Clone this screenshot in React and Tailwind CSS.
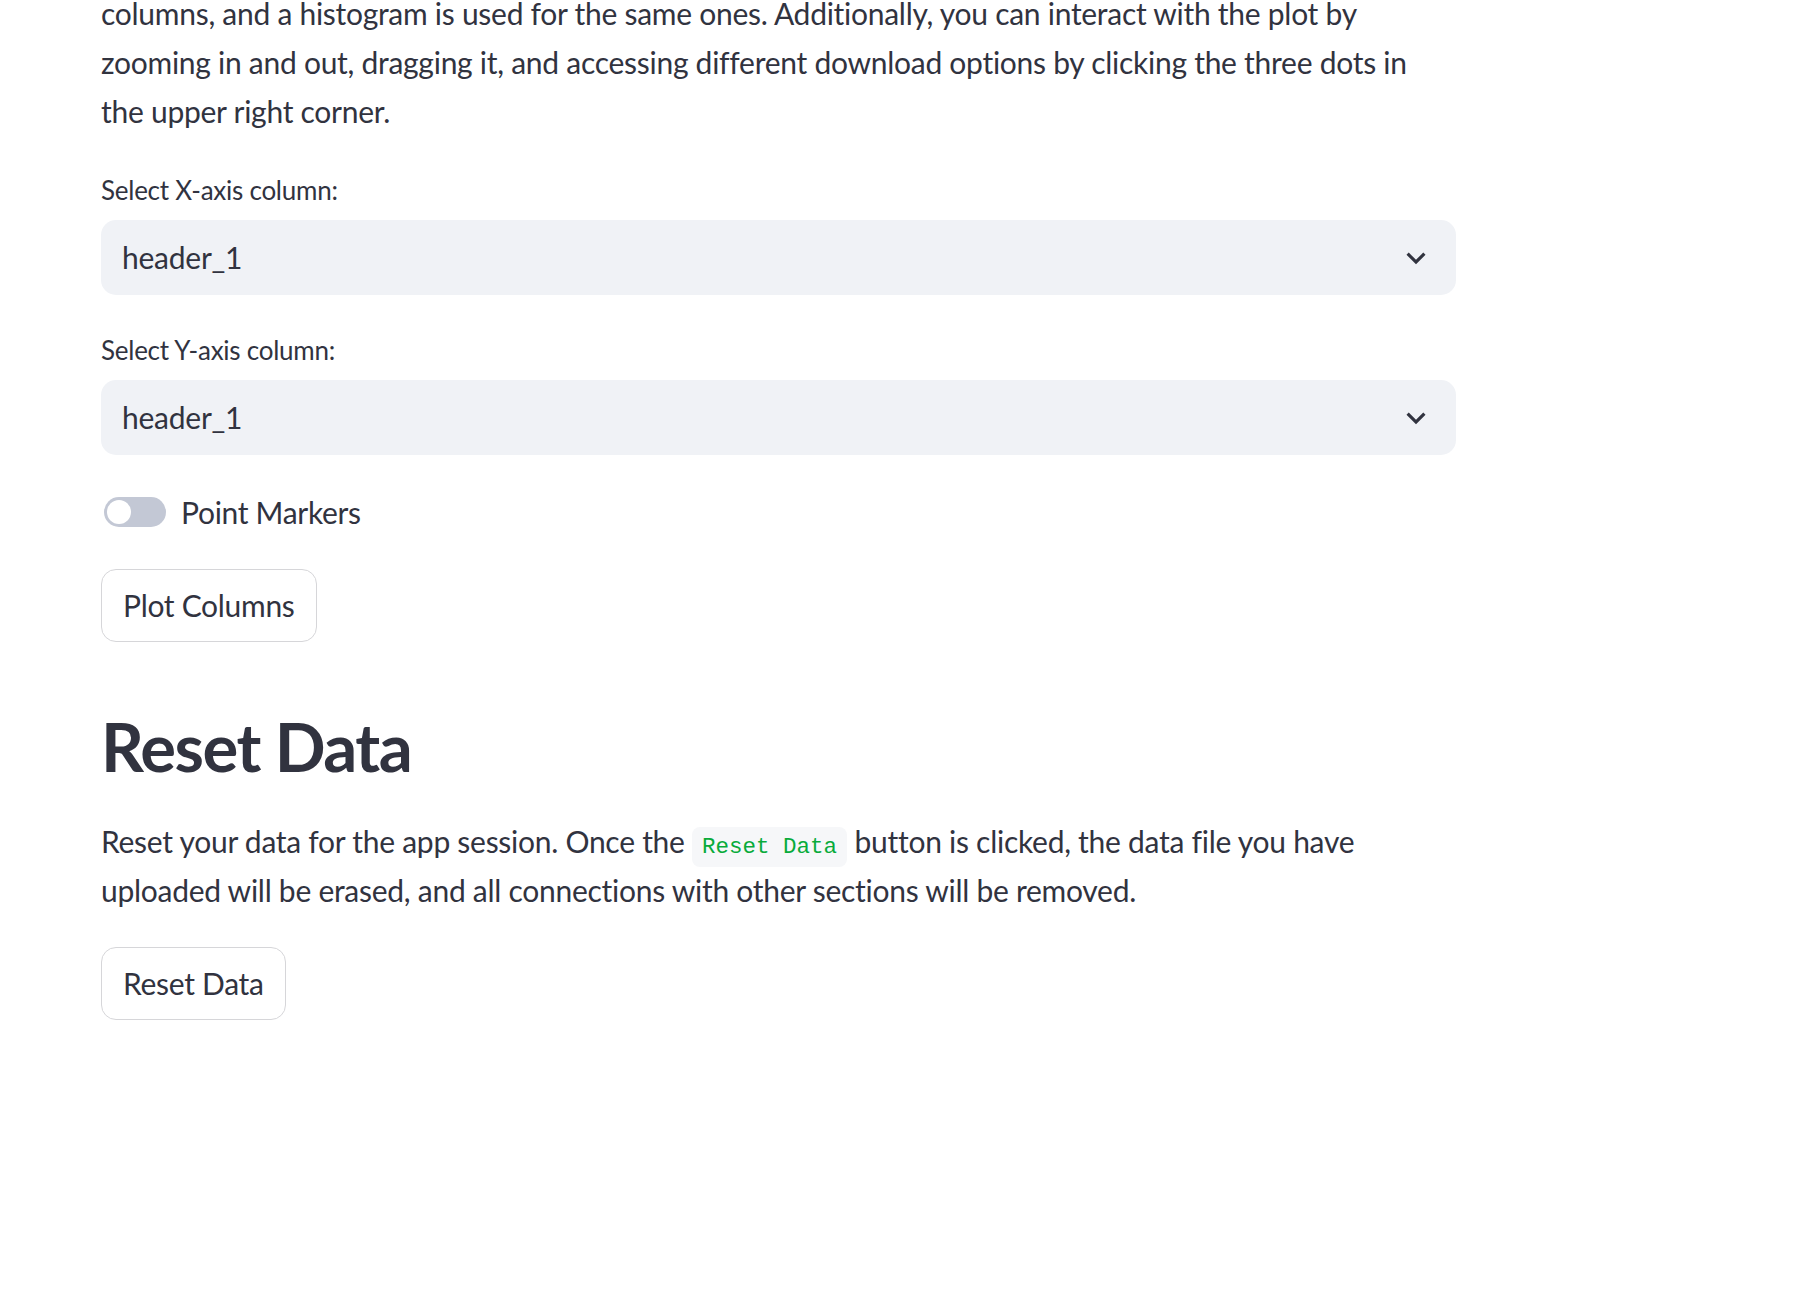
import React from "react";

const font = { fontFamily: "Lato, 'Noto Sans', sans-serif" };

function Chevron() {
  return (
    <svg width="38" height="38" viewBox="0 0 24 24" className="text-[#31333f]" fill="currentColor">
      <path d="M7.41 8.59 12 13.17l4.59-4.58L18 10l-6 6-6-6 1.41-1.41z" />
    </svg>
  );
}

function SelectBox({ label, value }) {
  return (
    <div className="flex flex-col">
      <div className="text-[26px] leading-[42px] tracking-[-0.25px] text-[#31333f]">{label}</div>
      <div className="mt-[9px] h-[75px] w-[1355px] rounded-[15px] bg-[#f0f2f6] flex items-center justify-between pl-[21px] pr-[21px]">
        <span className="text-[30px] tracking-[-0.25px] text-[#31333f]">{value}</span>
        <Chevron />
      </div>
    </div>
  );
}

function Button({ children }) {
  return (
    <button
      type="button"
      className="h-[73px] px-[21px] rounded-[15px] border border-[#d6d6d9] bg-white text-[30px] tracking-[-0.3px] text-[#31333f] self-start"
    >
      {children}
    </button>
  );
}

export default function App() {
  return (
    <div className="min-h-[1300px] bg-white overflow-hidden" style={font}>
      <div className="pl-[101px] flex flex-col text-[#31333f]">
        <div className="mt-[-11px] text-[30px] leading-[49px] tracking-[-0.27px] whitespace-nowrap">
          <div>columns, and a histogram is used for the same ones. Additionally, you can interact with the plot by</div>
          <div>zooming in and out, dragging it, and accessing different download options by clicking the three dots in</div>
          <div>the upper right corner.</div>
        </div>

        <div className="mt-[33px]">
          <SelectBox label="Select X-axis column:" value="header_1" />
        </div>
        <div className="mt-[34px]">
          <SelectBox label="Select Y-axis column:" value="header_1" />
        </div>

        <div className="mt-[33px] flex items-center h-[48px]">
          <div className="ml-[3px] w-[62px] h-[30px] rounded-full bg-[#c3c8d5] flex items-center pl-[3px]">
            <div className="w-[24px] h-[24px] rounded-full bg-white" />
          </div>
          <span className="ml-[15px] text-[30px] tracking-[-0.3px]">Point Markers</span>
        </div>

        <div className="mt-[33px]">
          <Button>Plot Columns</Button>
        </div>

        <h2 className="mt-[64px] text-[67px] leading-[81px] font-bold tracking-[-1.5px]">Reset Data</h2>

        <div className="mt-[30px] text-[30px] leading-[49px] tracking-[-0.27px] whitespace-nowrap">
          <div>
            Reset your data for the app session. Once the{" "}
            <code
              className="text-[22.5px] leading-none tracking-normal text-[#09ab3b] bg-[#f6f7f9] rounded-[8px] px-[10px] py-[7px]"
              style={{ fontFamily: "'Liberation Mono', monospace" }}
            >
              Reset Data
            </code>{" "}
            button is clicked, the data file you have
          </div>
          <div>uploaded will be erased, and all connections with other sections will be removed.</div>
        </div>

        <div className="mt-[32px]">
          <Button>Reset Data</Button>
        </div>
      </div>
    </div>
  );
}
